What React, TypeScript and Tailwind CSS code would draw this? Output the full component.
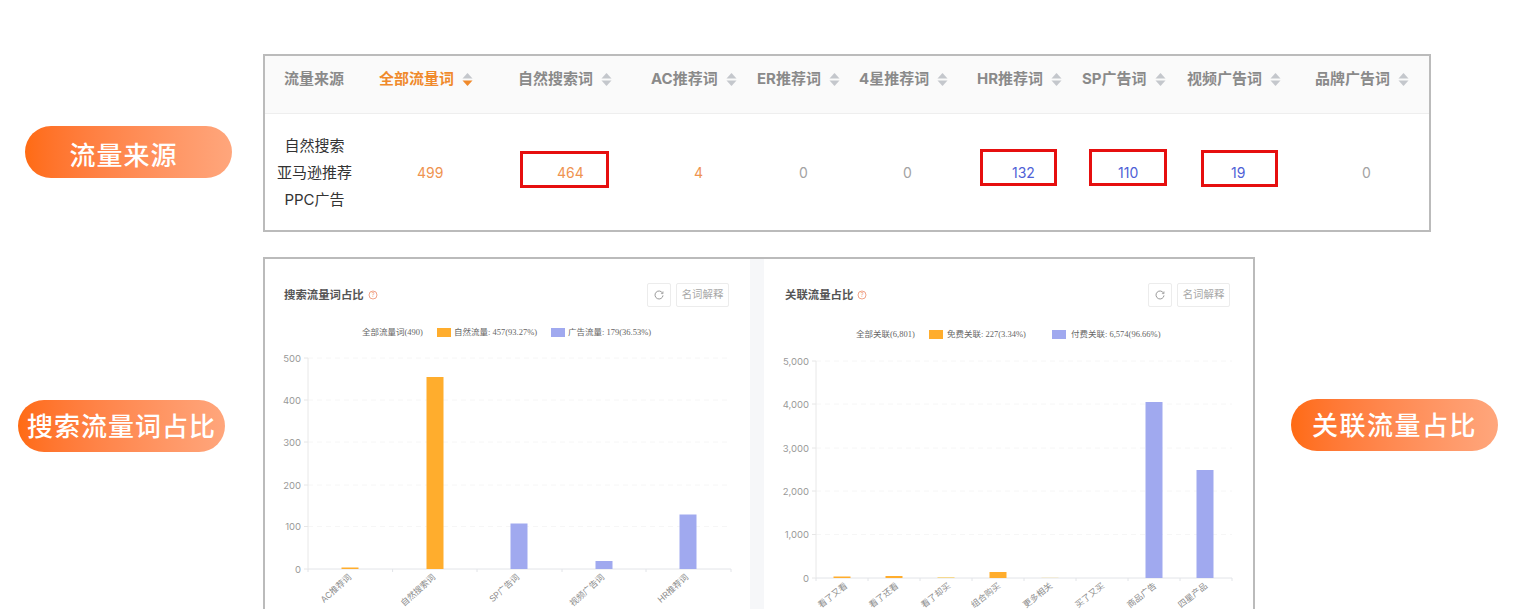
import React from 'react';

const sans = 'font-["Inter","Noto_Sans_CJK_SC",sans-serif]';

type Col = {
  name: string;
  value: string;
  width: string;
  headPad: string;
  valuePad: string;
  valueColor: string;
  active?: boolean;
  box?: string;
};

const columns: Col[] = [
  { name: '全部流量词', value: '499', width: 'w-[135px]', headPad: 'pl-[9px]', valuePad: 'pl-[47px]', valueColor: 'text-[#ef9350]', active: true },
  { name: '自然搜索词', value: '464', width: 'w-[135px]', headPad: 'pl-[13px]', valuePad: 'pl-[52px]', valueColor: 'text-[#ef9350]', box: 'left-[15px] top-[37px] h-[37px] w-[89px]' },
  { name: 'AC推荐词', value: '4', width: 'w-[108px]', headPad: 'pl-[11px]', valuePad: 'pl-[54px]', valueColor: 'text-[#ef9350]' },
  { name: 'ER推荐词', value: '0', width: 'w-[102px]', headPad: 'pl-[9px]', valuePad: 'pl-[51px]', valueColor: 'text-[#a3a3a3]' },
  { name: '4星推荐词', value: '0', width: 'w-[115px]', headPad: 'pl-[9px]', valuePad: 'pl-[53px]', valueColor: 'text-[#a3a3a3]' },
  { name: 'HR推荐词', value: '132', width: 'w-[110px]', headPad: 'pl-[12px]', valuePad: 'pl-[47px]', valueColor: 'text-[#4f5fd6]', box: 'left-[15px] top-[35px] h-[37px] w-[77px]' },
  { name: 'SP广告词', value: '110', width: 'w-[103px]', headPad: 'pl-[7px]', valuePad: 'pl-[43px]', valueColor: 'text-[#4f5fd6]', box: 'left-[14px] top-[35px] h-[37px] w-[78px]' },
  { name: '视频广告词', value: '19', width: 'w-[122px]', headPad: 'pl-[9px]', valuePad: 'pl-[53px]', valueColor: 'text-[#4f5fd6]', box: 'left-[23px] top-[36px] h-[37px] w-[77px]' },
  { name: '品牌广告词', value: '0', width: 'w-[129px]', headPad: 'pl-[15px]', valuePad: 'pl-[62px]', valueColor: 'text-[#a3a3a3]' },
];

function SortIcon({ active }: { active?: boolean }) {
  return (
    <svg width="11" height="15" viewBox="0 0 11 15" className="ml-[8px] shrink-0">
      <path d="M5.5 1 L10.5 6.5 L0.5 6.5 Z" fill="#c4c7cc" />
      <path d="M5.5 14 L10.5 8.5 L0.5 8.5 Z" fill={active ? '#f08a2c' : '#c4c7cc'} />
    </svg>
  );
}

function Pill({ text, className }: { text: string; className: string }) {
  return (
    <div className={`flex h-[52px] w-[207px] items-center justify-center rounded-[26px] bg-gradient-to-r from-[#ff6b12] to-[#ffa67c] text-[26px] font-medium text-white ${className}`}>
      {text}
    </div>
  );
}

function TrafficTable() {
  return (
    <div className="h-[178px] w-[1168px] border-2 border-[#bbbbbb] bg-white">
      <div className="flex h-[58px] items-center border-b border-[#eeeeee] bg-[#fafafa] pb-[10px] text-[15px] font-bold text-[#8a8a8a]">
        <div className="w-[105px] pl-[19px]">流量来源</div>
        {columns.map((c) => (
          <div key={c.name} className={`flex items-center ${c.width} ${c.headPad} ${c.active ? 'text-[#f08a2c]' : ''}`}>
            <span className="whitespace-nowrap">{c.name}</span>
            <SortIcon active={c.active} />
          </div>
        ))}
      </div>
      <div className="flex h-[117px] items-center">
        <div className="w-[105px] pr-[6px] text-center text-[15px] leading-[27px] text-[#333333]">
          <div>自然搜索</div>
          <div>亚马逊推荐</div>
          <div>PPC广告</div>
        </div>
        {columns.map((c) => (
          <div key={c.name} className={`relative flex h-full items-center ${c.width} ${c.valuePad}`}>
            <span className={`text-[14px] ${c.valueColor}`}>{c.value}</span>
            {c.box && <div className={`absolute border-[3px] border-[#e60f0f] ${c.box}`} />}
          </div>
        ))}
      </div>
    </div>
  );
}

type Bar = { cx: number; top: number; color: string };

type ChartProps = {
  viewBox: string;
  baseY: number;
  left: number;
  right: number;
  ticks: { label: string; y: number }[];
  xTicks: number[];
  labels: { text: string; x: number }[];
  bars: Bar[];
  angle: number;
};

const ORANGE = '#ffad2d';
const BLUE = '#a0a9ef';

function BarChart({ viewBox, baseY, left, right, ticks, xTicks, labels, bars, angle }: ChartProps) {
  return (
    <svg width="485" height="270" viewBox={viewBox} className="block">
      {ticks.map((t) => (
        <g key={t.label}>
          {t.label !== '0' && <line x1={left} x2={right} y1={t.y} y2={t.y} stroke="#f6f6f6" strokeDasharray="5 4" />}
          <line x1={left - 4} x2={left} y1={t.y} y2={t.y} stroke="#e6e6e6" />
          <text x={left - 7} y={t.y + 3.5} textAnchor="end" fontSize="9.5" fill="#999999" fontFamily="Inter, sans-serif">{t.label}</text>
        </g>
      ))}
      <line x1={left} x2={left} y1={ticks[ticks.length - 1].y} y2={baseY} stroke="#e8e8e8" />
      <line x1={left} x2={right} y1={baseY} y2={baseY} stroke="#e2e4e8" />
      {xTicks.map((x) => (
        <line key={x} x1={x} x2={x} y1={baseY} y2={baseY + 3} stroke="#e2e4e8" />
      ))}
      {bars.map((b) => (
        <rect key={b.cx} x={b.cx - 8.5} y={b.top} width="17" height={baseY - b.top} fill={b.color} />
      ))}
      {labels.map((l) => (
        <text
          key={l.text}
          x={l.x}
          y={baseY + 9}
          textAnchor="end"
          fontSize="8.6"
          fill="#8c8c8c"
          fontFamily="Inter, 'Noto Sans CJK SC', sans-serif"
          transform={`rotate(${angle} ${l.x} ${baseY + 9})`}
        >
          {l.text}
        </text>
      ))}
    </svg>
  );
}

function CardHeader({ title }: { title: string }) {
  return (
    <div className="flex h-[24px] items-center">
      <span className="pt-[1px] text-[11.4px] font-bold text-[#555555]">{title}</span>
      <svg width="10" height="10" viewBox="0 0 10 10" className="ml-[4px]">
        <circle cx="5" cy="5" r="4" fill="none" stroke="#ee9a7c" strokeWidth="0.9" />
        <text x="5" y="7.2" textAnchor="middle" fontSize="6" fill="#ee9a7c">?</text>
      </svg>
      <div className="ml-auto flex items-center gap-[5px]">
        <div className="flex h-[24px] w-[24px] items-center justify-center rounded-[2px] border border-[#ececec] bg-white">
          <svg width="10" height="10" viewBox="0 0 10 10">
            <path d="M8.6 3.2 A4 4 0 1 0 9 5.4" fill="none" stroke="#8f8f8f" strokeWidth="0.9" />
            <path d="M9 1.4 V3.6 H6.9" fill="none" stroke="#8f8f8f" strokeWidth="0.7" />
          </svg>
        </div>
        <div className="flex h-[24px] w-[53px] items-center justify-center rounded-[2px] border border-[#ececec] bg-white text-[10.4px] text-[#a8a8a8]">
          名词解释
        </div>
      </div>
    </div>
  );
}

const legendFont = 'font-["Liberation_Serif","Noto_Sans_CJK_SC",serif]';

function SearchCard() {
  return (
    <div className="h-[370px] w-[485px] bg-white pt-[24px]">
      <div className="pl-[19px] pr-[21px]">
        <CardHeader title="搜索流量词占比" />
      </div>
      <div className={`mt-[18px] flex h-[14px] items-center whitespace-nowrap pl-[97px] text-[8.5px] text-[#666666] ${legendFont}`}>
        <span className="w-[75px]">全部流量词(490)</span>
        <span className="h-[9px] w-[14px] bg-[#ffad2d]" />
        <span className="ml-[3px] w-[97px]">自然流量: 457(93.27%)</span>
        <span className="h-[9px] w-[14px] bg-[#a0a9ef]" />
        <span className="ml-[3px]">广告流量: 179(36.53%)</span>
      </div>
      <div className="mt-[6px]">
        <BarChart
          viewBox="265 345 485 270"
          baseY={569}
          left={308}
          right={731}
          angle={-42}
          ticks={[
            { label: '0', y: 569 },
            { label: '100', y: 526.5 },
            { label: '200', y: 485 },
            { label: '300', y: 442 },
            { label: '400', y: 400 },
            { label: '500', y: 358 },
          ]}
          xTicks={[308, 392.6, 477, 562, 646, 731]}
          labels={[
            { text: 'AC推荐词', x: 352 },
            { text: '自然搜索词', x: 436 },
            { text: 'SP广告词', x: 520 },
            { text: '视频广告词', x: 605 },
            { text: 'HR推荐词', x: 689 },
          ]}
          bars={[
            { cx: 350, top: 567.5, color: ORANGE },
            { cx: 435, top: 377, color: ORANGE },
            { cx: 519, top: 523.5, color: BLUE },
            { cx: 604, top: 561, color: BLUE },
            { cx: 688, top: 514.5, color: BLUE },
          ]}
        />
      </div>
    </div>
  );
}

function RelatedCard() {
  return (
    <div className="h-[370px] w-[489px] bg-white pt-[24px]">
      <div className="pl-[21px] pr-[23px]">
        <CardHeader title="关联流量占比" />
      </div>
      <div className={`mt-[20px] flex h-[14px] items-center whitespace-nowrap pl-[92px] text-[8.5px] text-[#666666] ${legendFont}`}>
        <span className="w-[73px]">全部关联(6,801)</span>
        <span className="h-[9px] w-[14px] bg-[#ffad2d]" />
        <span className="ml-[4px] w-[105px]">免费关联: 227(3.34%)</span>
        <span className="h-[9px] w-[14px] bg-[#a0a9ef]" />
        <span className="ml-[5px]">付费关联: 6,574(96.66%)</span>
      </div>
      <div className="mt-[4px]">
        <BarChart
          viewBox="764 345 485 270"
          baseY={578}
          left={816}
          right={1232}
          angle={-38}
          ticks={[
            { label: '0', y: 578 },
            { label: '1,000', y: 534.5 },
            { label: '2,000', y: 491 },
            { label: '3,000', y: 448 },
            { label: '4,000', y: 404 },
            { label: '5,000', y: 361 },
          ]}
          xTicks={[816, 868, 920, 972, 1024, 1076, 1128, 1180, 1232]}
          labels={[
            { text: '看了又看', x: 848 },
            { text: '看了还看', x: 899 },
            { text: '看了却买', x: 951 },
            { text: '组合购买', x: 1001 },
            { text: '更多相关', x: 1053 },
            { text: '买了又买', x: 1105 },
            { text: '商品广告', x: 1157 },
            { text: '四星产品', x: 1208 },
          ]}
          bars={[
            { cx: 842, top: 576.5, color: ORANGE },
            { cx: 894, top: 576, color: ORANGE },
            { cx: 946, top: 577, color: '#f5d98f' },
            { cx: 998, top: 572, color: ORANGE },
            { cx: 1050, top: 577.6, color: '#f5e3b0' },
            { cx: 1154, top: 402, color: BLUE },
            { cx: 1205, top: 470, color: BLUE },
          ]}
        />
      </div>
    </div>
  );
}

export default function App() {
  return (
    <div className={`h-[609px] w-[1521px] overflow-hidden bg-white ${sans}`}>
      <div className="flex pt-[54px]">
        <div className="w-[263px] pl-[25px] pt-[72px]">
          <Pill text="流量来源" className="pr-[10px] pt-[6px] tracking-[1px]" />
        </div>
        <TrafficTable />
      </div>
      <div className="mt-[25px] flex">
        <div className="w-[263px] pl-[18px] pt-[143px]">
          <Pill text="搜索流量词占比" className="tracking-[1px]" />
        </div>
        <div className="flex h-[372px] w-[992px] shrink-0 justify-between border-2 border-[#bbbbbb] bg-[#f6f7f9]">
          <SearchCard />
          <RelatedCard />
        </div>
        <div className="ml-[36px] pt-[142px]">
          <Pill text="关联流量占比" className="tracking-[1.5px]" />
        </div>
      </div>
    </div>
  );
}
